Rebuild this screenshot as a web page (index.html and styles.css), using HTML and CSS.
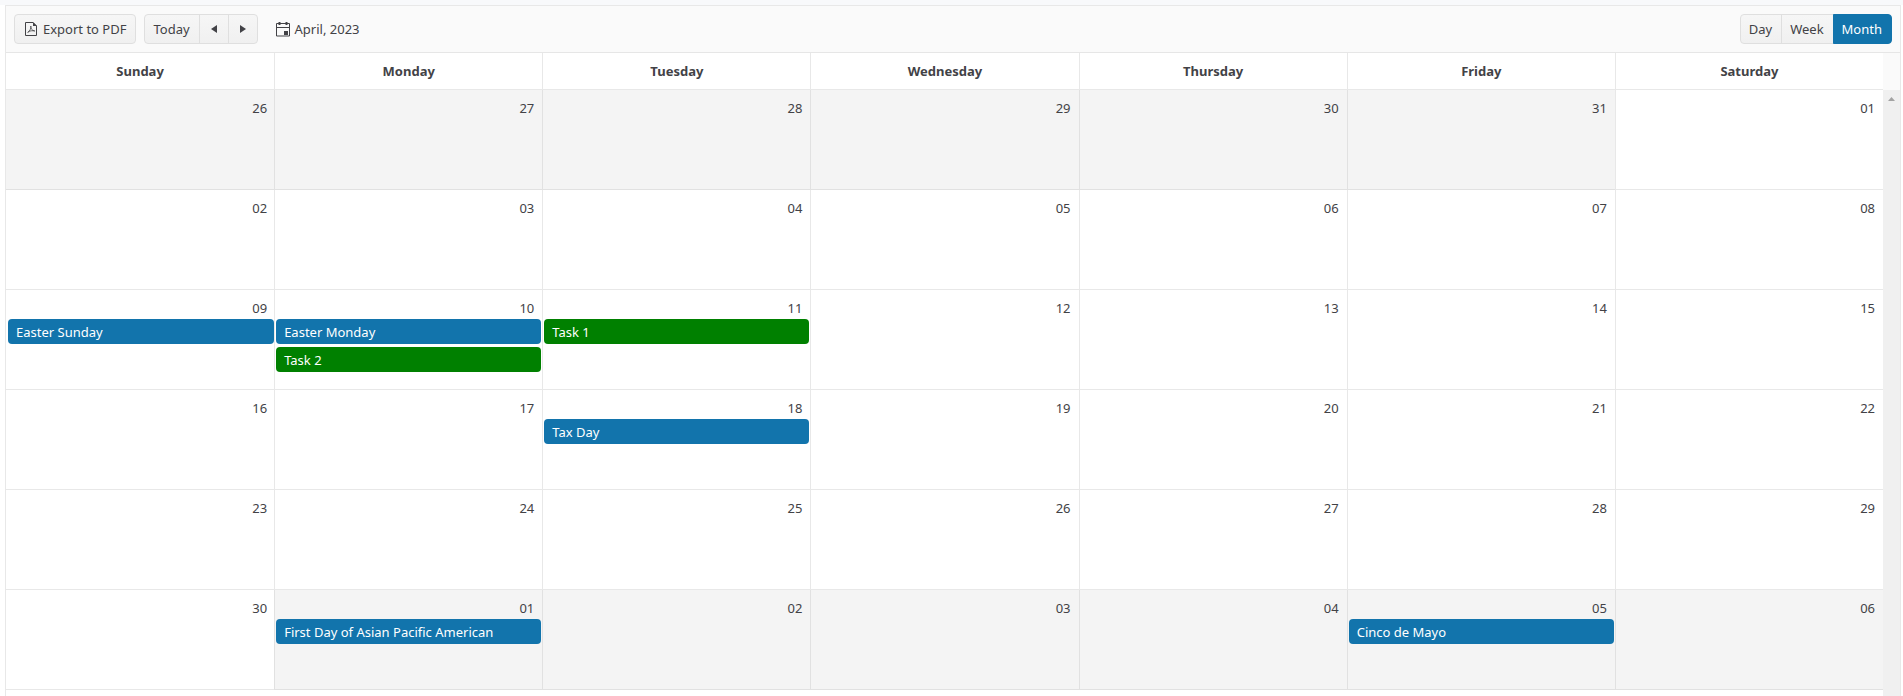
FILE: index.html
```html
<!DOCTYPE html>
<html lang="en">
<head>
<meta charset="utf-8">
<title>Scheduler</title>
<link rel="stylesheet" href="styles.css">
</head>
<body>
<main class="scheduler">
  <header class="toolbar">
    <button class="btn btn-export" type="button">
      <svg viewBox="0 0 12 14" width="12" height="14" aria-hidden="true"><path d="M.5.5h7.500l3.500 3.500v9.500H.5z" fill="none" stroke="currentColor"/><path d="M8 0v4h4z" fill="currentColor"/><path d="M5.800 4c.6 2-1 5-3.300 7M5.800 4c-.2 2.500 1 4.500 4 5M3 9.800c2-1 4.500-1.400 6.800-.8" fill="none" stroke="currentColor" stroke-width=".8"/></svg>
      Export to PDF
    </button>
    <div class="group">
      <button class="btn" type="button">Today</button>
      <button class="btn btn-arrow" type="button" aria-label="Previous"><svg viewBox="0 0 6 8" width="6" height="8"><path d="M6 0v8L0 4z" fill="currentColor"/></svg></button>
      <button class="btn btn-arrow" type="button" aria-label="Next"><svg viewBox="0 0 6 8" width="6" height="8"><path d="M0 0v8l6-4z" fill="currentColor"/></svg></button>
    </div>
    <a class="current" href="#">
      <svg viewBox="0 0 14 16" width="14" height="16" aria-hidden="true"><path d="M.5 2.500h13v12.500H.5zM.5 6.500h13" fill="none" stroke="currentColor"/><path d="M3 1h1v3H3zM10 1h1v3h-1zM2 1.500h3v2H2zM9 1.500h3v2H9zM8 10h4v4H8z" fill="currentColor"/></svg>
      April, 2023
    </a>
    <div class="group views">
      <button class="btn" type="button">Day</button>
      <button class="btn" type="button">Week</button>
      <button class="btn active" type="button">Month</button>
    </div>
  </header>
  <div class="body">
    <table class="month">
      <thead>
        <tr><th>Sunday</th><th>Monday</th><th>Tuesday</th><th>Wednesday</th><th>Thursday</th><th>Friday</th><th>Saturday</th></tr>
      </thead>
      <tbody>
        <tr><td class="other"><time>26</time></td><td class="other"><time>27</time></td><td class="other"><time>28</time></td><td class="other"><time>29</time></td><td class="other"><time>30</time></td><td class="other"><time>31</time></td><td><time>01</time></td></tr>
        <tr><td><time>02</time></td><td><time>03</time></td><td><time>04</time></td><td><time>05</time></td><td><time>06</time></td><td><time>07</time></td><td><time>08</time></td></tr>
        <tr><td><time>09</time><div class="event">Easter Sunday</div></td><td><time>10</time><div class="event">Easter Monday</div><div class="event task">Task 2</div></td><td><time>11</time><div class="event task">Task 1</div></td><td><time>12</time></td><td><time>13</time></td><td><time>14</time></td><td><time>15</time></td></tr>
        <tr><td><time>16</time></td><td><time>17</time></td><td><time>18</time><div class="event">Tax Day</div></td><td><time>19</time></td><td><time>20</time></td><td><time>21</time></td><td><time>22</time></td></tr>
        <tr><td><time>23</time></td><td><time>24</time></td><td><time>25</time></td><td><time>26</time></td><td><time>27</time></td><td><time>28</time></td><td><time>29</time></td></tr>
        <tr><td><time>30</time></td><td class="other"><time>01</time><div class="event">First Day of Asian Pacific American</div></td><td class="other"><time>02</time></td><td class="other"><time>03</time></td><td class="other"><time>04</time></td><td class="other"><time>05</time><div class="event">Cinco de Mayo</div></td><td class="other"><time>06</time></td></tr>
      </tbody>
    </table>
    <div class="gutter">
      <div class="corner"></div>
      <div class="scrollbar"><svg viewBox="0 0 7 4" width="7" height="4" aria-hidden="true"><path d="M0 4l3.500-4L7 4z" fill="#a3a3a3"/></svg></div>
    </div>
  </div>
</main>
</body>
</html>
```
FILE: styles.css
```css
* { box-sizing: border-box; }

body {
  margin: 0;
  min-height: 100vh;
  display: flex;
  border-top: 5px solid #f8f9fb;
  padding: 0 2px 0 5px;
  background: #fff;
  color: #424246;
  font: 13px/20px "Noto Sans", "Open Sans", sans-serif;
}

.scheduler {
  flex: 1;
  display: flex;
  flex-direction: column;
  border: solid #e8e8e8;
  border-width: 1px 1px 0;
}

.toolbar {
  display: flex;
  align-items: center;
  padding: 8px;
  background: #fafafa;
  border-bottom: 1px solid #e6e6e6;
}

.btn {
  display: flex;
  align-items: center;
  justify-content: center;
  height: 30px;
  padding: 0 9px 0 8px;
  border: 1px solid #dfdfdf;
  border-radius: 4px;
  background: linear-gradient(#f6f6f6, #f0f0f0);
  color: inherit;
  font: inherit;
  white-space: nowrap;
}

.btn-export {
  gap: 6px;
  margin-right: 8px;
  padding: 0 9px 0 10px;
}

.group { display: flex; }
.group .btn { border-radius: 0; }
.group .btn + .btn { margin-left: -1px; }
.group .btn:first-child { border-radius: 4px 0 0 4px; }
.group .btn:last-child { border-radius: 0 4px 4px 0; }
.group .btn-arrow { width: 30px; padding: 0; }

.group .active {
  background: #1274ac;
  border-color: #1274ac;
  color: #fff;
}

.views { margin-left: auto; }

.current {
  display: flex;
  align-items: center;
  gap: 5px;
  margin-left: 18px;
  color: inherit;
  text-decoration: none;
}

.body {
  flex: 1;
  display: grid;
  grid-template-columns: 1fr 17px;
}

.month {
  width: 100%;
  align-self: start;
  table-layout: fixed;
  border-spacing: 0;
}

.month th {
  height: 37px;
  padding: 0;
  border-bottom: 1px solid #e8e8e8;
  font-weight: 700;
}

.month td {
  height: 100px;
  padding: 8px 1px 0;
  border-bottom: 1px solid #e8e8e8;
  vertical-align: top;
}

.month td:first-child { padding: 8px 0 0 2px; }
.month th + th, .month td + td { border-left: 1px solid #e8e8e8; }
.month .other { background: #f4f4f4; border-color: #e1e1e1; }

.month time {
  display: block;
  height: 21px;
  padding-right: 7px;
  text-align: right;
}

.event {
  height: 25px;
  margin-bottom: 3px;
  padding: 3px 8px 2px;
  border-radius: 4px;
  background: #1274ac;
  color: #fff;
  white-space: nowrap;
  overflow: hidden;
}

.task { background: #008000; }

.gutter { display: flex; flex-direction: column; }
.corner { height: 37px; background: #fafafa; }

.scrollbar {
  flex: 1;
  display: flex;
  justify-content: center;
  align-items: flex-start;
  padding-top: 7px;
  background: #f0f0f0;
}
```
